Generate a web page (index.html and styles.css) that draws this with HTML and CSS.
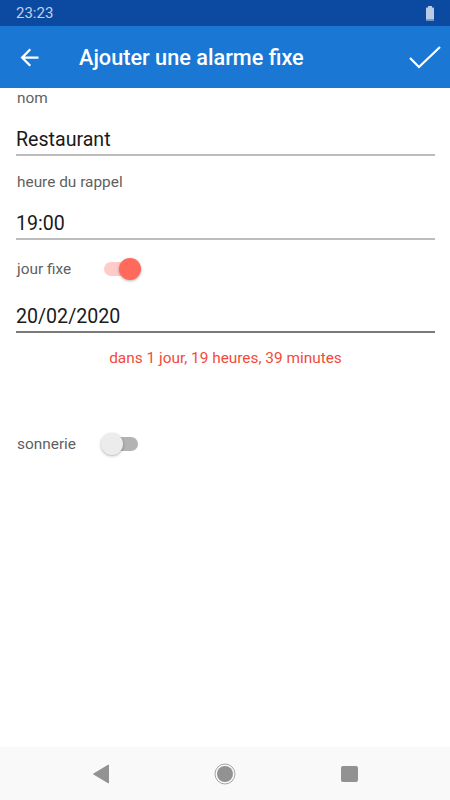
FILE: index.html
```html
<!DOCTYPE html>
<html lang="fr">
<head>
    <meta charset="UTF-8">
    <meta name="viewport" content="width=device-width, initial-scale=1.0">
    <title>Ajouter une alarme fixe</title>
    <link rel="stylesheet" href="styles.css">
</head>
<body>
    <div class="screen">
        <div class="status-bar">
            <span class="time">23:23</span>
            <svg class="battery" width="10" height="15" viewBox="0 0 10 15">
                <rect x="3" y="0" width="4" height="2" fill="#b9cbe6"/>
                <rect x="1" y="1.5" width="8" height="13" rx="0.5" fill="#b9cbe6"/>
                <rect x="1" y="13" width="8" height="1.5" fill="#7f9cc9"/>
            </svg>
        </div>

        <header class="app-bar">
            <svg class="back" width="27" height="27" viewBox="0 0 24 24">
                <path d="M20 11H7.83l5.59-5.59L12 4l-8 8 8 8 1.41-1.41L7.83 13H20v-2z" fill="#fff"/>
            </svg>
            <h1 class="title">Ajouter une alarme fixe</h1>
            <svg class="check" width="34" height="26" viewBox="0 0 34 26">
                <polyline points="2,13 11,22 32,2" fill="none" stroke="#fff" stroke-width="2.2"/>
            </svg>
        </header>

        <main class="form">
            <div class="label first">nom</div>
            <div class="input">Restaurant</div>

            <div class="label">heure du rappel</div>
            <div class="input">19:00</div>

            <div class="toggle-row">
                <span class="toggle-label">jour fixe</span>
                <span class="switch on">
                    <span class="track"></span>
                    <span class="thumb"></span>
                </span>
            </div>
            <div class="input date">20/02/2020</div>

            <p class="remaining">dans 1 jour, 19 heures, 39 minutes</p>

            <div class="toggle-row sound">
                <span class="toggle-label">sonnerie</span>
                <span class="switch">
                    <span class="track"></span>
                    <span class="thumb"></span>
                </span>
            </div>
        </main>

        <nav class="nav-bar">
            <span class="nav-key">
                <svg width="18" height="20" viewBox="0 0 18 20">
                    <path d="M16.5 1 L16.5 19 L1.5 10 Z" fill="#929292" stroke="#929292" stroke-width="1" stroke-linejoin="round"/>
                </svg>
            </span>
            <span class="nav-key">
                <svg width="22" height="22" viewBox="0 0 22 22">
                    <circle cx="11" cy="11" r="10" fill="none" stroke="#a5a5a5" stroke-width="1"/>
                    <circle cx="11" cy="11" r="8" fill="#929292"/>
                </svg>
            </span>
            <span class="nav-key">
                <span class="recent"></span>
            </span>
        </nav>
    </div>
</body>
</html>
```

FILE: styles.css
```css
* {
    margin: 0;
    padding: 0;
    box-sizing: border-box;
}

body {
    font-family: Roboto, "Noto Sans", sans-serif;
    background: #fff;
}

.screen {
    width: 450px;
    height: 800px;
    display: flex;
    flex-direction: column;
}

/* status bar */
.status-bar {
    height: 26px;
    background: #0c4aa2;
    display: flex;
    align-items: center;
    justify-content: space-between;
    padding: 0 15px 0 16px;
}

.time {
    color: rgba(255, 255, 255, 0.75);
    font-size: 15px;
    line-height: 26px;
}

.battery {
    margin-top: 1px;
}

/* app bar */
.app-bar {
    height: 62px;
    background: #1a78d4;
    display: flex;
    align-items: center;
    padding: 0 8px 0 16px;
}

.back {
    margin-top: 1px;
}

.title {
    flex: 1;
    margin-left: 36px;
    color: #fff;
    font-size: 21.7px;
    font-weight: 500;
}

.check {
    margin-top: 2px;
}

/* form */
.form {
    flex: 1;
    padding: 0 15px 0 16px;
}

.label {
    padding-top: 16px;
    padding-left: 1px;
    font-size: 15.4px;
    line-height: 20px;
    color: #5f5f5f;
}

.label.first {
    padding-top: 0;
}

.input {
    margin-top: 18px;
    font-size: 19.6px;
    line-height: 28px;
    color: #1a1a1a;
    border-bottom: 2px solid #bdbdbd;
}

.input.date {
    margin-top: 19px;
    border-bottom-color: #7a7a7a;
}

.toggle-row {
    margin-top: 14px;
    height: 30px;
    display: flex;
    align-items: center;
}

.toggle-row.sound {
    margin-top: 61px;
}

.toggle-label {
    width: 85px;
    padding-left: 1px;
    font-size: 15.4px;
    line-height: 20px;
    color: #5f5f5f;
}

.switch {
    position: relative;
    width: 40px;
    height: 22px;
}

.track {
    position: absolute;
    left: 3px;
    top: 4px;
    width: 34px;
    height: 14px;
    border-radius: 7px;
    background: #b3b3b3;
}

.thumb {
    position: absolute;
    left: 0;
    top: 0;
    width: 22px;
    height: 22px;
    border-radius: 50%;
    background: #ececec;
    box-shadow: 0 1px 3px rgba(0, 0, 0, 0.3);
}

.switch.on .track {
    background: #ffcbc6;
}

.switch.on .thumb {
    left: auto;
    right: 0;
    background: #ff6a5d;
}

.remaining {
    margin-top: 15px;
    text-align: center;
    font-size: 15.4px;
    line-height: 20px;
    color: #f4493a;
}

/* navigation bar */
.nav-bar {
    height: 53px;
    background: #f9f9f9;
    display: flex;
    align-items: center;
    justify-content: center;
    gap: 84px;
}

.nav-key {
    width: 40px;
    display: flex;
    justify-content: center;
}

.recent {
    width: 17px;
    height: 16px;
    border-radius: 2px;
    background: #929292;
}
```
